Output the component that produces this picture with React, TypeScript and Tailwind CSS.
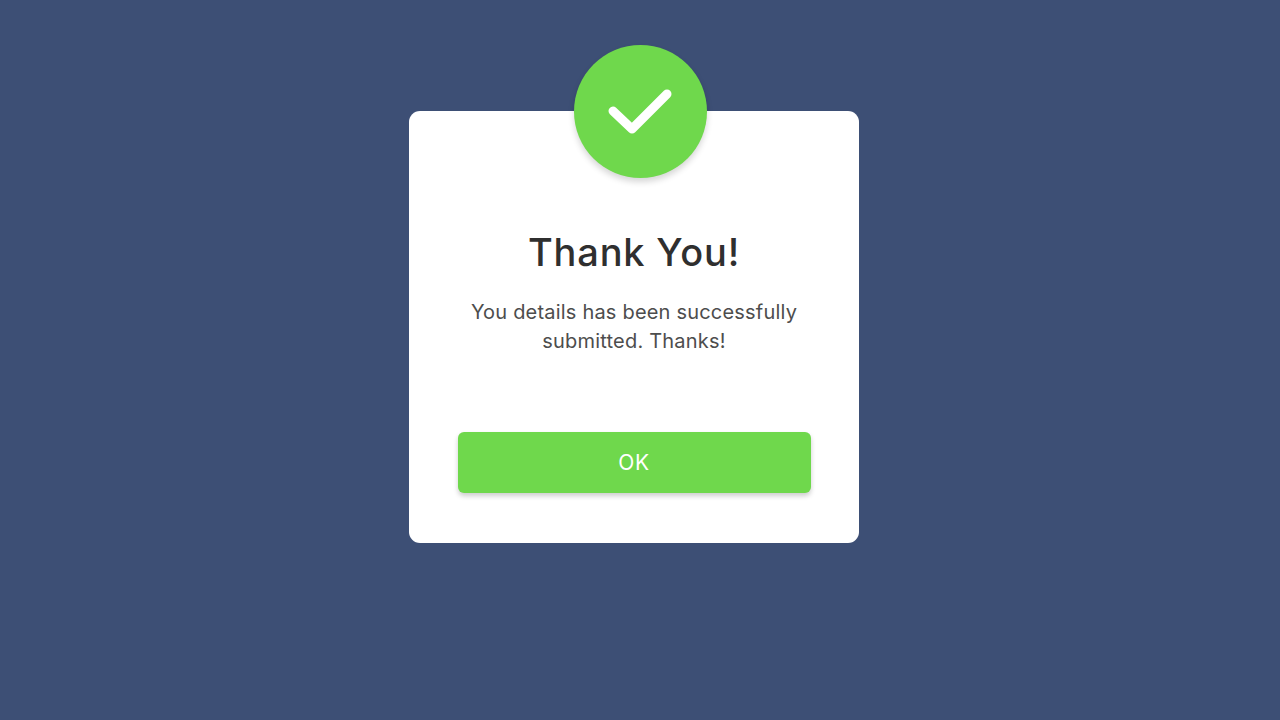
export default function App() {
  return (
    <div className="flex min-h-[720px] w-full items-start justify-center bg-[#3d4f75] pt-[111px] pr-[12px] font-['Inter','Liberation_Sans',sans-serif]">
      <div className="relative flex h-[432px] w-[450px] flex-col items-center rounded-[11px] bg-white px-[49px] pt-[117px]">
        {/* circle sits over the card's top edge */}
        <div className="absolute left-[165px] top-[-66px] flex h-[133px] w-[133px] items-center justify-center rounded-full bg-[#6fd84c] shadow-[0_4px_6px_rgba(0,0,0,0.16)]">
          <svg width="133" height="133" viewBox="0 0 133 133" fill="none">
            <path d="M39 66 L58 84 L93 49" stroke="#ffffff" strokeWidth="9" strokeLinecap="round" strokeLinejoin="round" />
          </svg>
        </div>
        <h1 className="text-[38px] font-medium leading-[48px] tracking-[0.8px] text-[#2f2f2f]">Thank You!</h1>
        <p className="mt-[22px] w-[345px] text-center text-[20px] leading-[29px] tracking-[0.2px] text-[#4d4d4d]">
          You details has been successfully submitted. Thanks!
        </p>
        <button className="mt-[75.5px] h-[61.5px] w-[353px] rounded-[6px] bg-[#6fd84c] text-[21px] tracking-[0.6px] text-white shadow-[0_3px_5px_rgba(0,0,0,0.2)]">
          OK
        </button>
      </div>
    </div>
  );
}
